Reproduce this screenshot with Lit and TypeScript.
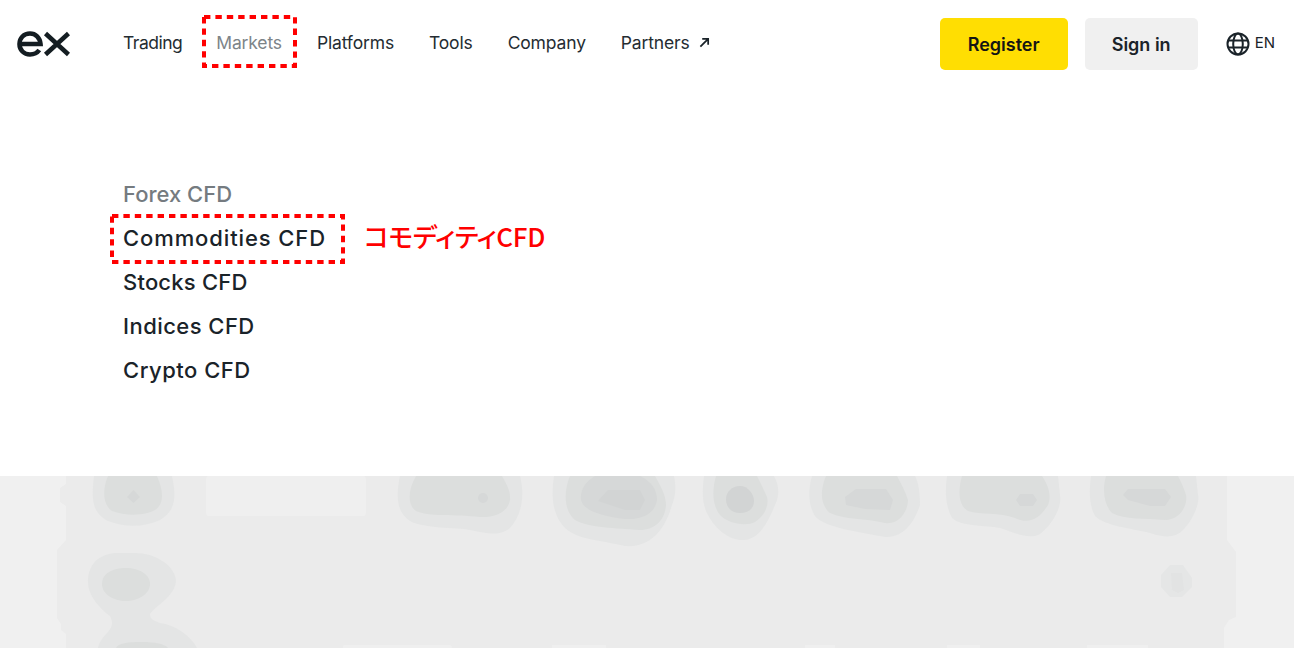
import { LitElement, html, css, svg } from "lit";
import { customElement } from "lit/decorators.js";

const blob = (d: string, fill: string) => svg`<path d=${d} fill=${fill} />`;

const C1 = "#e4e5e5", C2 = "#dcdedd", C3 = "#d2d4d4", C25 = "#d6d8d8";

const dashed = (w: number, h: number) => html`<svg class="mark" width=${w} height=${h} viewBox="0 0 ${w} ${h}">
  <rect x="2" y="2" width=${w - 4} height=${h - 4} fill="none" stroke="#ff0000" stroke-width="4" stroke-dasharray="6.4 5" />
</svg>`;

const ITEMS = [
  { label: "Forex CFD", ls: 0 },
  { label: "Commodities CFD", ls: 0.89 },
  { label: "Stocks CFD", ls: 0.2 },
  { label: "Indices CFD", ls: 0.45 },
  { label: "Crypto CFD", ls: 0.5 },
];

@customElement("app-root")
export class AppRoot extends LitElement {
  static styles = css`
    :host { display: block; width: 1294px; height: 648px; overflow: hidden; background: #fff; color: #1a2329; font-family: Inter, "Liberation Sans", sans-serif; }
    .page { display: flex; flex-direction: column; height: 648px; }
    header { height: 86px; flex: none; display: flex; align-items: center; padding: 0 18px 0 17px; }
    .logo { display: block; margin-right: 53px; margin-top: 2px; }
    nav { display: flex; gap: 35px; font-size: 17.5px; letter-spacing: -0.15px; margin-top: -1px; color: #242c32; }
    nav span { position: relative; display: inline-flex; align-items: center; gap: 9px; }
    nav .first { margin-right: -1px; letter-spacing: -0.5px; }
    nav .active { color: #7d8488; }
    .mark { position: absolute; display: block; }
    nav .mark { left: -14px; top: -17px; }
    .right { margin-left: auto; display: flex; align-items: center; }
    .btn { height: 52px; border-radius: 5px; display: flex; align-items: center; justify-content: center; font-size: 18px; font-weight: 600; margin-top: 2px; }
    .reg { width: 128px; background: #ffde02; color: #141414; }
    .sign { width: 113px; margin-left: 17px; background: #f0f0f0; }
    .lang { display: flex; align-items: center; margin-left: 28px; gap: 5px; font-size: 15px; }
    .lang svg { display: block; margin-top: 2px; }
    .lang b { font-weight: 400; margin-top: -2px; margin-right: 1px; }
    main { flex: 1; padding: 86px 0 0 123px; }
    ul { list-style: none; margin: 0; padding: 0; font-weight: 450; font-size: 22px; }
    li { height: 44px; line-height: 44px; position: relative; white-space: nowrap; }
    li.active { color: #757b80; }
    li .mark { left: -13px; top: -2px; }
    .note { position: absolute; left: 241px; top: -2px; line-height: 44px; color: #ff0000; font-size: 26px; font-weight: 500; letter-spacing: -0.3px; font-feature-settings: "palt"; font-family: "Noto Sans CJK JP", sans-serif; }
    .hero { flex: none; display: block; width: 1294px; height: 172px; }
  `;

  render() {
    return html`<div class="page">
      <header>
        <svg class="logo" width="53" height="26" viewBox="0 0 53 26" fill="none" stroke="#141d22" stroke-width="4.6">
          <path d="M2.500 13H23.500C23 6.500 18.500 2.500 13 2.500C6.800 2.500 2.500 7 2.500 13C2.500 19 6.800 23.500 13 23.500C17 23.500 20.300 21.800 22.300 19" />
          <path d="M28.500 2.500L51.500 23.500M51.500 2.500L28.500 23.500" />
        </svg>
        <nav>
          <span class="first">Trading</span>
          <span class="active">Markets${dashed(95, 53)}</span>
          <span>Platforms</span>
          <span>Tools</span>
          <span>Company</span>
          <span>Partners
            <svg width="11" height="11" viewBox="0 0 12 12" fill="none" stroke="#1a2329" stroke-width="1.900"><path d="M1.500 10.500L10 2M3.500 2H10V8.500" /></svg>
          </span>
        </nav>
        <div class="right">
          <div class="btn reg">Register</div>
          <div class="btn sign">Sign in</div>
          <div class="lang">
            <svg width="24" height="24" viewBox="0 0 24 24" fill="none" stroke="#1a2329" stroke-width="2">
              <circle cx="12" cy="12" r="10.500" />
              <ellipse cx="12" cy="12" rx="4.800" ry="10.500" />
              <path d="M2 8.500H22M2 15.500H22" />
            </svg>
            <b>EN</b>
          </div>
        </div>
      </header>
      <main>
        <ul>
          ${ITEMS.map((it, i) => html`<li class=${i === 0 ? "active" : ""} style="letter-spacing:${it.ls}px">${it.label}${i === 1
            ? html`${dashed(235, 50)}<span class="note">コモディティCFD</span>`
            : ""}</li>`)}
        </ul>
      </main>
      <svg class="hero" viewBox="0 476 1294 172">
        <rect x="0" y="476" width="1294" height="172" fill="#f0f0f0" />
        ${blob("M66 476V484L60 488V502L66 506V540L57 550V618L61 624V630L66 634V648H1224V628L1229 620L1236 617V552L1227 540V476Z", "#ebebeb")}
        ${svg`<rect x="206" y="476" width="160" height="40" rx="3" fill="#efefef" />`}
        ${svg`<path d="M343 648V646Q343 645 345 645H450Q452 645 452 648ZM552 648V645H606V648ZM805 648V645H835V648ZM947 648V645H980V648ZM1087 648V645H1148V648Z" fill="#efefef" />`}

        ${blob("M94 476C92 495 90 512 108 521C125 528 145 527 160 520C177 510 176 495 172 476Z", C1)}
        ${blob("M108 476C102 490 103 505 112 511C125 516 145 516 155 510C165 503 163 490 157 476Z", C2)}
        ${blob("M133.500 490L140 497L133.500 503L127 497Z", C25)}

        ${blob("M400 476C396 495 396 512 410 521C425 529 455 527 470 530C490 534 500 536 510 528C522 515 525 495 520 476Z", C1)}
        ${blob("M416 476C408 490 407 505 416 511C428 517 455 514 480 517C495 518 508 512 510 500C511 490 505 482 502 476Z", C2)}
        ${svg`<circle cx="483" cy="498" r="5" fill=${C25} />`}

        ${blob("M554 476C551 495 552 515 565 528C578 540 600 540 625 546C650 548 665 530 672 505C676 495 676 485 674 476Z", C1)}
        ${blob("M570 476C564 490 563 510 575 520C590 528 615 528 640 530C655 530 665 520 666 505C666 495 660 485 655 476Z", C2)}
        ${blob("M595 476C585 482 580 490 581 500C583 510 600 516 625 519C645 520 655 512 657 500C657 490 652 482 640 476Z", C25)}
        ${blob("M608 490L640 490L645 500L640 510L625 510L598 501Z", C3)}

        ${blob("M704 476C702 490 702 505 708 515C716 530 730 541 745 540C760 538 768 522 775 505C780 495 779 485 774 476Z", C1)}
        ${blob("M716 476C712 490 712 505 720 515C727 523 745 527 755 522C765 516 769 505 767 497C764 490 760 482 757 476Z", C2)}
        ${blob("M740 486C748 486 754 494 754 501C754 509 748 513 740 513C732 513 726 508 726 499C726 492 732 486 740 486Z", C3)}

        ${blob("M812 476C808 490 808 505 815 516C825 528 860 532 885 537C905 538 915 520 920 505C920 490 918 482 915 476Z", C1)}
        ${blob("M826 476C820 490 820 505 830 513C845 520 865 518 885 523C900 525 908 510 908 500C905 490 900 482 897 476Z", C2)}
        ${blob("M856 489L886 489L893 500L890 510L865 509L846 505L845 497Z", C25)}

        ${blob("M947 476C945 490 945 505 952 518C962 527 985 525 1000 528C1015 533 1030 540 1040 534C1055 522 1062 505 1060 495L1058 476Z", C1)}
        ${blob("M962 476C958 490 958 505 968 511C980 515 1000 512 1015 518C1030 525 1040 518 1048 505C1052 495 1048 485 1042 476Z", C2)}
        ${blob("M1020 494L1033 494L1037 500L1033 506L1020 506L1016 500Z", C25)}

        ${blob("M1091 476C1089 490 1089 505 1095 516C1105 526 1130 528 1150 533C1165 538 1175 538 1183 530C1195 518 1200 500 1198 495L1196 476Z", C1)}
        ${blob("M1106 476C1102 490 1104 505 1112 513C1125 520 1145 518 1165 520C1180 520 1188 505 1186 495C1184 488 1181 482 1178 476Z", C2)}
        ${blob("M1128 489L1165 489L1171 497L1165 506L1150 506L1128 500L1123 495Z", C25)}

        ${blob("M1170 565L1183 565L1192 578L1192 587L1182 597L1170 597L1161 587V575Z", "#e5e6e6")}
        ${blob("M1171 573L1182 573L1184 590L1178 593L1172 590Z", "#e2e3e3")}

        ${blob("M115 553C95 555 88 568 88 582C88 597 102 610 110 616C113 622 113 626 108 632C102 638 99 643 98 648H197C190 635 175 625 160 623C155 621 150 620 150 614C155 606 176 596 176 580C174 565 155 553 135 553Z", C1)}
        ${blob("M102 584C102 573 113 568 126 568C140 568 150 575 150 584C150 594 138 601 126 601C113 601 102 594 102 584Z", C2)}
        ${blob("M116 648C118 643 128 642 142 642C155 642 165 644 168 648Z", C2)}
      </svg>
    </div>`;
  }
}
